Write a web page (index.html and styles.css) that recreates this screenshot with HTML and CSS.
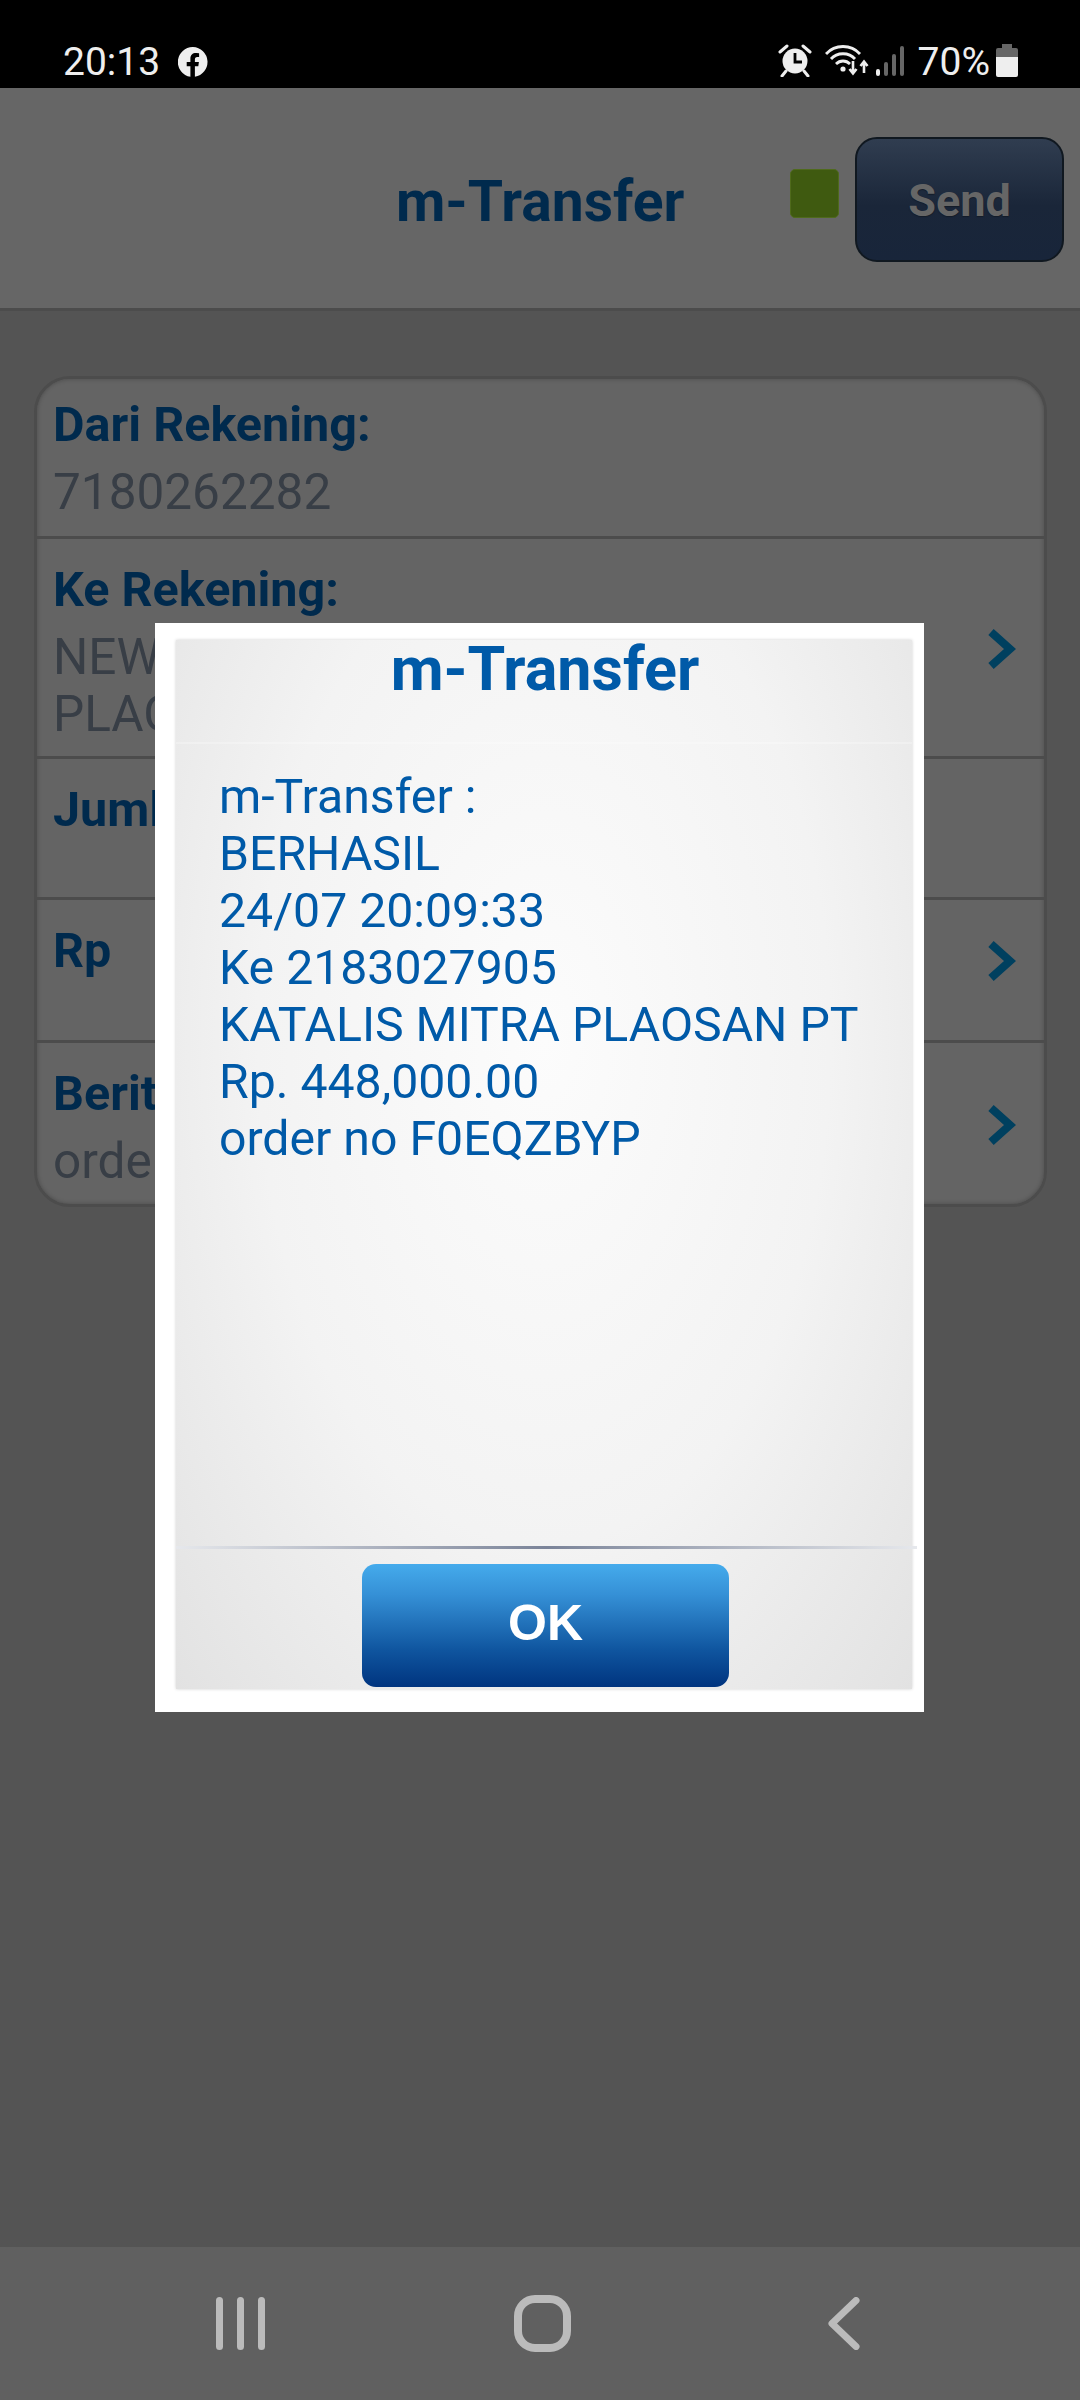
FILE: index.html
```html
<!DOCTYPE html>
<html lang="en">
<head>
    <meta charset="UTF-8">
    <meta name="viewport" content="width=device-width, initial-scale=1.0">
    <link rel="stylesheet" href="styles.css">
    <title>m-Transfer</title>
</head>
<body>
    <div class="statusbar">
        <div class="status-left">
            <span class="clock">20:13</span>
            <svg class="fb" width="30" height="30" viewBox="0 0 30 30">
                <path fill="#eee" d="M15 0a15 15 0 0 0-2.600 29.800V19.200H8.700V15h3.700v-3.200c0-3.700 2.200-5.700 5.500-5.700 1.600 0 3.200.3 3.200.3v3.600h-1.800c-1.800 0-2.400 1.100-2.400 2.300V15h4l-.6 4.200h-3.400v10.600A15 15 0 0 0 15 0z"/>
            </svg>
        </div>
        <div class="status-right">
            <svg class="alarm" width="34" height="33" viewBox="0 0 34 33">
                <circle cx="17" cy="17" r="12.500" fill="#eee"/>
                <path d="M17 9v9h7" fill="none" stroke="#000" stroke-width="2.800"/>
                <path d="M2 8l7-6M32 8l-7-6M8 27l-4 5M26 27l4 5" fill="none" stroke="#eee" stroke-width="3" stroke-linecap="round"/>
            </svg>
            <svg class="wifi" width="46" height="32" viewBox="0 0 46 32">
                <path d="M1 10c9-10 25-10 34 0M6 15c6-7 18-7 24 0M11 20c4-4 10-4 14 0" fill="none" stroke="#eee" stroke-width="2.800"/>
                <circle cx="18" cy="25" r="2.600" fill="#eee"/>
                <path d="M28 17v12M24.500 25l3.500 4.500 3.500-4.500M39 29V18M35.500 22l3.500-4.500 3.500 4.500" fill="none" stroke="#eee" stroke-width="2.600"/>
            </svg>
            <svg class="signal" width="30" height="32" viewBox="0 0 30 32">
                <rect x="1" y="24" width="4" height="7" rx="2" fill="#eee"/>
                <rect x="9" y="17" width="4" height="14" rx="2" fill="#666"/>
                <rect x="17" y="9" width="4" height="22" rx="2" fill="#666"/>
                <rect x="25" y="1" width="4" height="30" rx="2" fill="#666"/>
            </svg>
            <span class="battery-text">70%</span>
            <svg class="battery" width="22" height="33" viewBox="0 0 22 33">
                <path fill="#666" d="M6 0h10v4h4a2 2 0 0 1 2 2v7H0V6a2 2 0 0 1 2-2h4z"/>
                <path fill="#eee" d="M0 13h22v18a2 2 0 0 1-2 2H2a2 2 0 0 1-2-2z"/>
            </svg>
        </div>
    </div>

    <div class="header">
        <div class="header-title">m-Transfer</div>
        <div class="indicator"></div>
        <div class="send-btn">Send</div>
    </div>

    <div class="content">
        <div class="card">
            <div class="row row-from">
                <div class="label">Dari Rekening:</div>
                <div class="value">7180262282</div>
            </div>
            <div class="row row-to">
                <div class="label">Ke Rekening:</div>
                <div class="value">NEW KATALIS<br>PLAOSAN</div>
                <svg class="chevron" width="30" height="42" viewBox="0 0 30 42"><path d="M5 4l19 17L5 38" fill="none" stroke="#00405f" stroke-width="8"/></svg>
            </div>
            <div class="row row-count">
                <div class="label">Jumlah</div>
            </div>
            <div class="row row-amount">
                <div class="label">Rp</div>
                <svg class="chevron" width="30" height="42" viewBox="0 0 30 42"><path d="M5 4l19 17L5 38" fill="none" stroke="#00405f" stroke-width="8"/></svg>
            </div>
            <div class="row row-note">
                <div class="label">Berita</div>
                <div class="value">order</div>
                <svg class="chevron" width="30" height="42" viewBox="0 0 30 42"><path d="M5 4l19 17L5 38" fill="none" stroke="#00405f" stroke-width="8"/></svg>
            </div>
        </div>
    </div>

    <div class="navbar">
        <svg width="49" height="53" viewBox="0 0 49 53">
            <path d="M3.500 3.500v46M24.500 3.500v46M45.500 3.500v46" fill="none" stroke="#bbb" stroke-width="7" stroke-linecap="round"/>
        </svg>
        <svg class="nav-home" width="57" height="57" viewBox="0 0 57 57">
            <rect x="4" y="4" width="49" height="49" rx="17" fill="none" stroke="#bbb" stroke-width="8"/>
        </svg>
        <svg class="nav-back" width="32" height="53" viewBox="0 0 32 53">
            <path d="M28 3.500L4 26.500l24 23" fill="none" stroke="#bbb" stroke-width="7" stroke-linecap="round" stroke-linejoin="round"/>
        </svg>
    </div>

    <!-- result popup, sits over the dimmed form -->
    <div class="dialog">
        <div class="dialog-inner">
            <div class="dialog-title">m-Transfer</div>
            <div class="dialog-msg">
                m-Transfer :<br>
                BERHASIL<br>
                24/07 20:09:33<br>
                Ke 2183027905<br>
                KATALIS MITRA PLAOSAN PT<br>
                Rp. 448,000.00<br>
                order no F0EQZBYP
            </div>
            <div class="dialog-sep"></div>
            <div class="dialog-footer">
                <div class="ok-btn">OK</div>
            </div>
        </div>
    </div>
</body>
</html>
```

FILE: styles.css
```css
body {
    display: flex;
    flex-direction: column;
    position: relative;
    width: 1080px;
    height: 2400px;
    margin: 0;
    overflow: hidden;
    background-color: #545454;
    font-family: Roboto, sans-serif;
}

.statusbar {
    display: flex;
    justify-content: space-between;
    align-items: flex-end;
    height: 88px;
    padding: 0 62px 10px 63px;
    box-sizing: border-box;
    background-color: #000;
    color: #eee;
}

.status-left,
.status-right {
    display: flex;
    align-items: center;
}

.clock {
    font-size: 39px;
    line-height: 32px;
    margin-right: 18px;
}

.status-right .alarm { margin-right: 13px; }
.status-right .wifi { margin-right: 4px; margin-bottom: 2px; }
.status-right .signal { margin-right: 13px; margin-top: 1px; }

.battery-text {
    font-size: 39px;
    line-height: 32px;
    margin-right: 6px;
    margin-top: 3px;
}

.header {
    display: flex;
    align-items: center;
    height: 220px;
    padding-right: 16px;
    background-color: #666;
    border-bottom: 3px solid #4c4c4c;
}

.header-title {
    flex: 1;
    padding-top: 6px;
    padding-left: 396px;
    font-size: 57px;
    font-weight: bold;
    color: #002a4d;
}

.indicator {
    width: 49px;
    height: 49px;
    margin-right: 16px;
    margin-bottom: 10px;
    box-sizing: border-box;
    border: 1px solid #4f6a1c;
    border-radius: 5px;
    background-color: #3f5a10;
}

.send-btn {
    width: 209px;
    height: 125px;
    margin-top: 2px;
    padding-top: 5px;
    box-sizing: border-box;
    border: 2px solid #101820;
    border-radius: 22px;
    background: linear-gradient(#303d50, #1a2639 55%, #18253a);
    color: #666;
    font-size: 45px;
    font-weight: bold;
    line-height: 113px;
    text-align: center;
    text-shadow: 0 1px 1px #141c28;
}

.content {
    flex: 1;
    padding: 65px 33px 0 34px;
}

.card {
    border: 3px solid #4c4c4c;
    border-radius: 36px;
    background-color: #646464;
    box-shadow: inset 0 0 4px rgba(0, 0, 0, 0.25);
}

.row {
    position: relative;
    box-sizing: border-box;
    padding: 23px 18px 0 16px;
    border-bottom: 3px solid #4c4c4c;
}

.row:last-child { border-bottom: 0; }

.row-from { height: 160px; padding-top: 18px; }
.row-to { height: 220px; }
.row-count { height: 141px; }
.row-amount { height: 143px; }
.row-note { height: 161px; }

.label {
    font-size: 48.500px;
    font-weight: bold;
    line-height: 56px;
    color: #002a4d;
}

.value {
    margin-top: 11px;
    font-size: 49.500px;
    line-height: 57px;
    color: #383e46;
}

.chevron {
    position: absolute;
    right: 28px;
    top: 50%;
    margin-top: -20px;
}

.row-amount .chevron { margin-top: -30px; }

.navbar {
    display: flex;
    align-items: center;
    height: 153px;
    padding-left: 216px;
    box-sizing: border-box;
    background-color: #606060;
}

.nav-home { margin-left: 249px; }
.nav-back { margin-left: 257px; }

.dialog {
    position: absolute;
    left: 155px;
    top: 623px;
    width: 769px;
    height: 1089px;
    padding: 17px 12px 23px 21px;
    box-sizing: border-box;
    background-color: #fff;
}

.dialog-inner {
    display: flex;
    flex-direction: column;
    height: 100%;
    background: radial-gradient(ellipse at 50% 38%, #fcfcfc 0%, #f3f3f3 55%, #e2e2e2 100%);
    box-shadow: 0 0 3px #d0d0d0;
}

.dialog-title {
    height: 102px;
    padding-left: 2px;
    border-bottom: 2px solid rgba(255, 255, 255, 0.25);
    font-size: 61px;
    font-weight: bold;
    line-height: 58px;
    text-align: center;
    color: #005aa8;
}

.dialog-msg {
    flex: 1;
    padding: 24px 0 0 43px;
    font-size: 48.200px;
    line-height: 57px;
    color: #005aa8;
}

.dialog-sep {
    height: 3px;
    margin-right: -5px;
    background: linear-gradient(90deg, #e6e8ec, #7b8499 50%, #e6e8ec);
}

.dialog-footer {
    display: flex;
    justify-content: center;
    height: 140px;
    padding: 15px 0 0 3px;
    box-sizing: border-box;
}

.ok-btn {
    width: 367px;
    height: 123px;
    box-sizing: border-box;
    border-radius: 14px;
    background: linear-gradient(#45abec, #3590d6 25%, #0f559f 70%, #00347f);
    color: #fff;
    font-family: "Liberation Sans", sans-serif;
    font-size: 50px;
    font-weight: bold;
    line-height: 118px;
    text-align: center;
}
```
